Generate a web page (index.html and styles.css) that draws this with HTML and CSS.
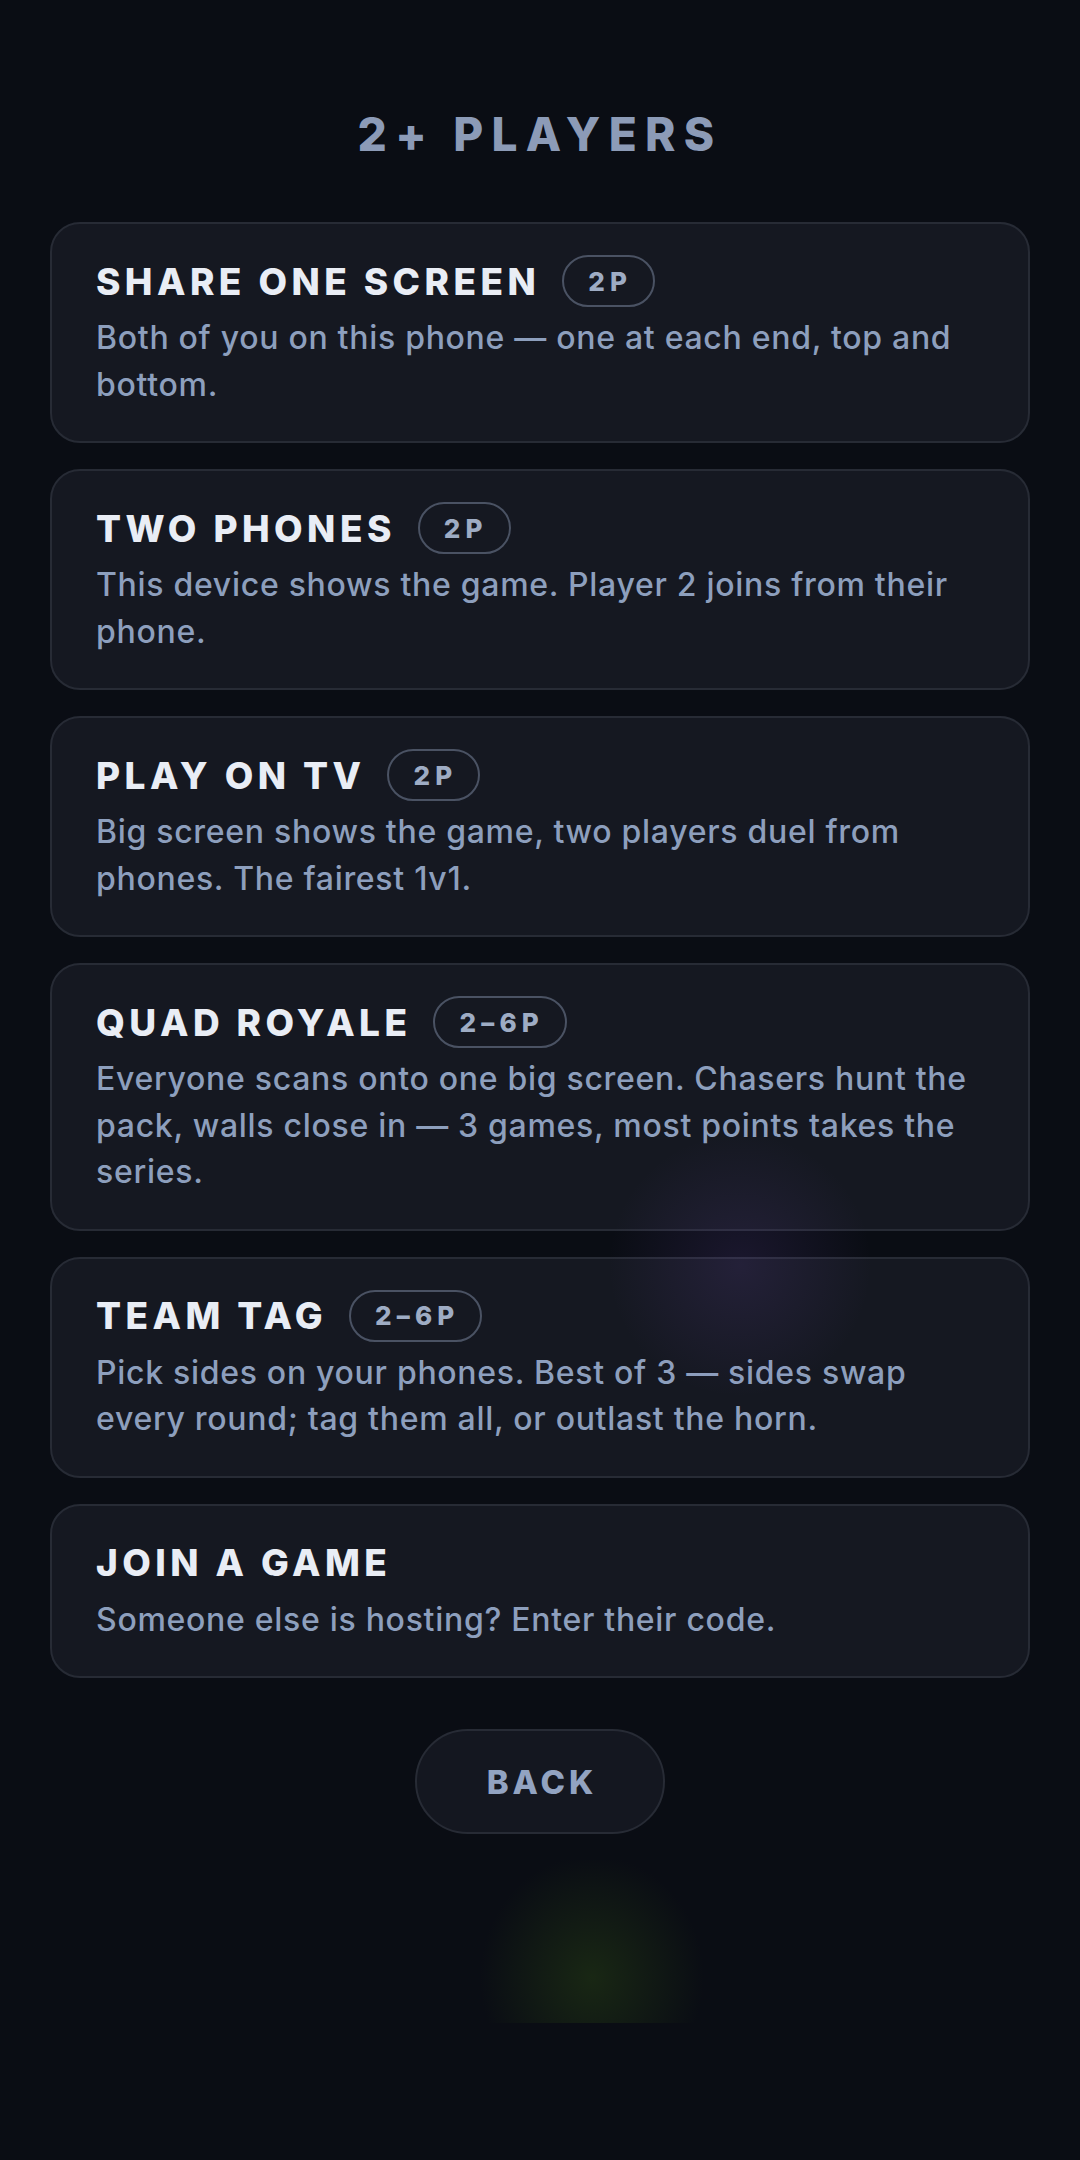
FILE: index.html
```html
<!DOCTYPE html>
<html lang="en">
<head>
  <meta charset="UTF-8" />
  <title>2+ Players</title>
  <link rel="stylesheet" href="styles.css">
</head>
<body>
  <main class="screen">
    <h1 class="title">2+ PLAYERS</h1>

    <div class="modes">
      <div class="card">
        <div class="card-head">
          <span class="card-title">SHARE ONE SCREEN</span>
          <span class="badge">2P</span>
        </div>
        <p class="card-text">Both of you on this phone — one at each end, top and bottom.</p>
      </div>

      <div class="card">
        <div class="card-head">
          <span class="card-title">TWO PHONES</span>
          <span class="badge">2P</span>
        </div>
        <p class="card-text">This device shows the game. Player 2 joins from their phone.</p>
      </div>

      <div class="card">
        <div class="card-head">
          <span class="card-title">PLAY ON TV</span>
          <span class="badge">2P</span>
        </div>
        <p class="card-text">Big screen shows the game, two players duel from phones. The fairest 1v1.</p>
      </div>

      <div class="card">
        <div class="card-head">
          <span class="card-title">QUAD ROYALE</span>
          <span class="badge">2–6P</span>
        </div>
        <p class="card-text">Everyone scans onto one big screen. Chasers hunt the pack, walls close in — 3 games, most points takes the series.</p>
      </div>

      <div class="card">
        <div class="card-head">
          <span class="card-title">TEAM TAG</span>
          <span class="badge">2–6P</span>
        </div>
        <p class="card-text">Pick sides on your phones. Best of 3 — sides swap every round; tag them all, or outlast the horn.</p>
      </div>

      <div class="card">
        <div class="card-head">
          <span class="card-title">JOIN A GAME</span>
        </div>
        <p class="card-text">Someone else is hosting? Enter their code.</p>
      </div>
    </div>

    <div class="actions">
      <button class="back-btn">BACK</button>
    </div>
  </main>

  <!-- soft background lights -->
  <div class="glow glow-purple"></div>
  <div class="glow glow-green"></div>
</body>
</html>
```

FILE: styles.css
```css
body {
  margin: 0;
  min-height: 2160px;
  background-color: #0a0d14;
  font-family: Inter, "Noto Sans", sans-serif;
  position: relative;
  overflow: hidden;
}

.glow {
  position: absolute;
  pointer-events: none;
}

.glow-purple {
  left: 590px;
  top: 1115px;
  width: 300px;
  height: 300px;
  background: radial-gradient(circle, rgba(120, 80, 190, 0.15), rgba(120, 80, 190, 0) 62%);
}

.glow-green {
  left: 480px;
  top: 1860px;
  width: 224px;
  height: 163px;
  background: radial-gradient(ellipse 50% 75% at 50% 72%, rgba(45, 75, 20, 0.42), rgba(45, 75, 20, 0) 100%);
}

.screen {
  padding: 107px 50px 0;
}

.title {
  margin: 0 0 60px;
  text-align: center;
  font-size: 46px;
  line-height: 55px;
  font-weight: 800;
  letter-spacing: 0.18em;
  color: #8c9bb7;
}

.modes {
  display: flex;
  flex-direction: column;
  gap: 26px;
}

.card {
  padding: 31px 44px 33px;
  border: 2px solid #272b35;
  border-radius: 30px;
  background: #151821;
}

.card-head {
  display: flex;
  align-items: center;
  gap: 22px;
  height: 52px;
  margin-bottom: 8px;
}

.card-title {
  font-size: 37px;
  font-weight: 800;
  letter-spacing: 0.12em;
  color: #e9edf5;
}

.badge {
  display: flex;
  align-items: center;
  height: 48px;
  padding: 0 21px 0 24px;
  border: 2px solid #4a5263;
  border-radius: 26px;
  font-size: 26px;
  font-weight: 800;
  letter-spacing: 0.2em;
  color: #9eacc4;
}

.card-text {
  margin: 0;
  font-size: 32px;
  line-height: 46.5px;
  font-weight: 500;
  letter-spacing: 0.022em;
  color: #8d9fbd;
}

.actions {
  display: flex;
  justify-content: center;
  margin-top: 51px;
}

.back-btn {
  width: 250px;
  height: 105px;
  border: 2px solid #272b35;
  border-radius: 53px;
  background: #141720;
  font-family: Inter, "Noto Sans", sans-serif;
  font-size: 33px;
  font-weight: 800;
  letter-spacing: 0.12em;
  color: #92a3c1;
  padding: 0 0 0 4px;
}
```
